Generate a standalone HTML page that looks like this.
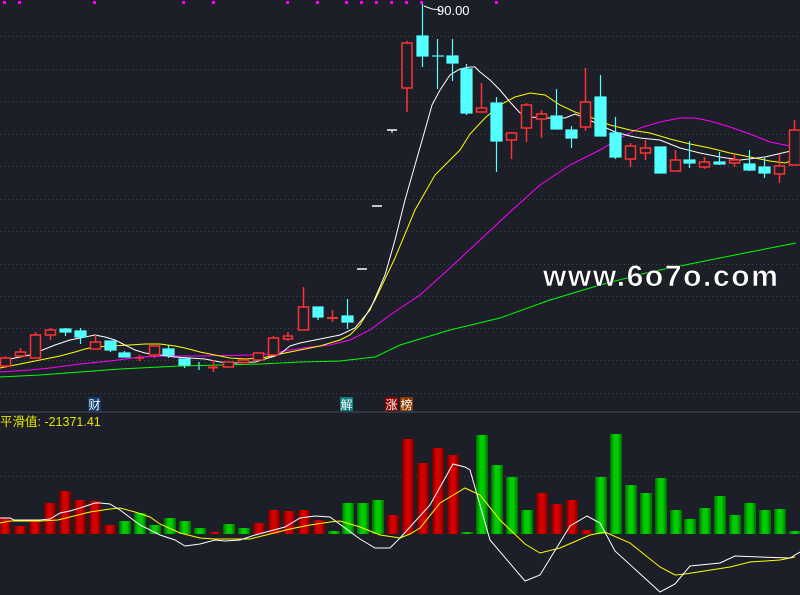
<!DOCTYPE html>
<html><head><meta charset="utf-8"><style>
html,body{margin:0;padding:0;background:#1c1f27;}
svg{display:block}
</style></head><body>
<svg width="800" height="595" xmlns="http://www.w3.org/2000/svg" font-family="Liberation Sans, Noto Sans CJK SC, sans-serif">
<defs>
<linearGradient id="gr" x1="0" x2="1"><stop offset="0" stop-color="#6a0000"/><stop offset="0.35" stop-color="#d40000"/><stop offset="0.65" stop-color="#d40000"/><stop offset="1" stop-color="#6a0000"/></linearGradient>
<linearGradient id="gg" x1="0" x2="1"><stop offset="0" stop-color="#006a00"/><stop offset="0.35" stop-color="#00cc00"/><stop offset="0.65" stop-color="#00cc00"/><stop offset="1" stop-color="#006a00"/></linearGradient>
</defs>
<rect width="800" height="595" fill="#1c1f27"/>
<g stroke="#3e4450" stroke-dasharray="1,3" stroke-width="1">
<line x1="0" x2="800" y1="36.5" y2="36.5"/><line x1="0" x2="800" y1="69.5" y2="69.5"/><line x1="0" x2="800" y1="101.5" y2="101.5"/><line x1="0" x2="800" y1="134.5" y2="134.5"/><line x1="0" x2="800" y1="166.5" y2="166.5"/><line x1="0" x2="800" y1="199.5" y2="199.5"/><line x1="0" x2="800" y1="231.5" y2="231.5"/><line x1="0" x2="800" y1="264.5" y2="264.5"/><line x1="0" x2="800" y1="296.5" y2="296.5"/><line x1="0" x2="800" y1="328.5" y2="328.5"/><line x1="0" x2="800" y1="360.5" y2="360.5"/><line x1="0" x2="800" y1="393.5" y2="393.5"/><line x1="0" x2="800" y1="476.5" y2="476.5"/>
</g>
<line x1="0" x2="800" y1="412" y2="412" stroke="#3a404c" stroke-width="1.5"/>
<g fill="#ff00ff">
<rect x="3" y="1" width="3" height="3"/><rect x="18" y="1" width="3" height="3"/><rect x="93" y="1" width="3" height="3"/><rect x="182" y="1" width="3" height="3"/><rect x="212" y="1" width="3" height="3"/><rect x="286" y="1" width="3" height="3"/><rect x="316" y="1" width="3" height="3"/><rect x="345" y="1" width="3" height="3"/><rect x="360" y="1" width="3" height="3"/><rect x="375" y="1" width="3" height="3"/><rect x="390" y="1" width="3" height="3"/><rect x="405" y="1" width="3" height="3"/><rect x="420" y="1" width="3" height="3"/><rect x="495" y="1" width="3" height="3"/>
</g>
<!-- MAs -->
<g fill="none" stroke-width="1">
<polyline stroke="#00ff00" points="0,377 40,375 80,372 120,369 180,366 260,364 300,362 340,361 375,357 400,345 450,330 500,318 550,300 600,285 650,272 700,262 750,252 796,243"/>
<polyline stroke="#ff00ff" points="0,372 30,370 50,368 80,364 110,361 140,357 170,356 200,356 250,355 270,354 290,350 310,347 330,345 350,340 370,330 390,315 420,295 450,268 480,240 510,212 540,185 570,165 600,150 620,138 640,128 660,122 680,118 695,118 710,121 730,127 750,134 770,142 790,146 800,145"/>
<polyline stroke="#ffff00" points="0,368 20,364 40,360 60,356 75,352 85,349 95,347 110,346 130,345 145,344 160,344 175,346 185,348 200,352 215,355 230,358 245,359 262,358 280,354 300,350 320,346 340,340 350,335 360,325 375,300 395,258 415,210 435,175 450,160 460,150 470,134 485,118 500,105 515,97 530,93 545,95 560,105 575,112 590,117 610,125 630,130 650,133 670,139 690,144 710,148 730,153 750,157 770,161 785,163 800,158"/>
<polyline stroke="#ffffff" points="0,361 10,359 30,355 40,351 55,345 70,340 85,337 95,335 105,337 115,340 125,345 135,350 145,353 160,355 175,357 190,358 205,359 220,362 235,363 255,362 265,359 275,356 280,354 290,346 300,343 320,339 340,335 355,328 370,310 385,275 395,240 405,200 415,165 425,130 432,105 440,90 450,75 460,69 470,67 475,67 480,72 490,80 500,90 510,102 520,113 530,117 545,118 565,118 575,114 585,118 600,125 615,132 630,136 640,138 660,140 680,148 700,153 720,157 740,160 765,157 795,150"/>
</g>
<!-- candles red hollow -->
<g stroke="#ff3232" fill="#1c1f27" stroke-width="1.5">
<line x1="5.5" x2="5.5" y1="356" y2="368"/><rect x="0.5" y="358" width="10" height="8"/>
<line x1="20.5" x2="20.5" y1="348" y2="358"/><rect x="15.5" y="352" width="10" height="4"/>
<line x1="35.5" x2="35.5" y1="332" y2="358"/><rect x="30.5" y="335" width="10" height="23"/>
<line x1="50.5" x2="50.5" y1="328" y2="340"/><rect x="45.5" y="330" width="10" height="5"/>
<line x1="95.5" x2="95.5" y1="335" y2="349"/><rect x="90.5" y="342" width="10" height="7"/>
<line x1="139.5" x2="139.5" y1="355" y2="361"/><line x1="135" x2="144" y1="358" y2="358"/>
<line x1="154.5" x2="154.5" y1="346" y2="358"/><rect x="149.5" y="346" width="10" height="9"/>
<line x1="213.5" x2="213.5" y1="360" y2="372"/><line x1="208" x2="218" y1="367.5" y2="367.5" stroke-width="2"/>
<rect x="223.5" y="362" width="10" height="5"/>
<rect x="238.5" y="360" width="10" height="2.5"/>
<rect x="253.5" y="353" width="10" height="7"/>
<line x1="273.5" x2="273.5" y1="336" y2="355"/><rect x="268.5" y="338" width="10" height="17"/>
<line x1="288" x2="288" y1="332" y2="341"/><rect x="283.5" y="336" width="9" height="3"/>
<line x1="303.5" x2="303.5" y1="287" y2="330"/><rect x="298.5" y="307" width="10" height="23"/>
<line x1="332.5" x2="332.5" y1="310" y2="322"/><line x1="327" x2="338" y1="318" y2="318" stroke-width="2"/>
<line x1="407" x2="407" y1="41" y2="112"/><rect x="402" y="43" width="10" height="45"/>
<line x1="481.5" x2="481.5" y1="83" y2="108"/><rect x="476.5" y="108" width="10" height="4"/>
<line x1="511.5" x2="511.5" y1="132" y2="159"/><rect x="506.5" y="133" width="10" height="7"/>
<line x1="526.5" x2="526.5" y1="103" y2="142"/><rect x="521.5" y="105" width="10" height="23"/>
<line x1="541.5" x2="541.5" y1="110" y2="138"/><rect x="536.5" y="114" width="10" height="5"/>
<line x1="585.5" x2="585.5" y1="68" y2="131"/><rect x="580.5" y="102" width="10" height="25"/>
<line x1="630.5" x2="630.5" y1="143" y2="167"/><rect x="625.5" y="146" width="10" height="13"/>
<line x1="645.5" x2="645.5" y1="140" y2="160"/><rect x="640.5" y="148" width="10" height="5"/>
<line x1="675.5" x2="675.5" y1="150" y2="171"/><rect x="670.5" y="160" width="10" height="11"/>
<line x1="704.5" x2="704.5" y1="157" y2="169"/><rect x="699.5" y="162" width="10" height="5"/>
<line x1="734.5" x2="734.5" y1="154" y2="167"/><rect x="729.5" y="160" width="10" height="3"/>
<line x1="779.5" x2="779.5" y1="154" y2="183"/><rect x="774.5" y="166" width="10" height="8"/>
<line x1="794.5" x2="794.5" y1="120" y2="130"/><rect x="789.5" y="130" width="11" height="35"/>
</g>
<!-- cyan filled -->
<g stroke="#54ffff" fill="#54ffff" stroke-width="1.2">
<line x1="65.5" x2="65.5" y1="328" y2="336"/><rect x="60" y="329" width="11" height="3"/>
<line x1="80.5" x2="80.5" y1="328" y2="344"/><rect x="75" y="331" width="11" height="6"/>
<line x1="110.5" x2="110.5" y1="341" y2="352"/><rect x="105" y="341" width="11" height="9"/>
<line x1="124.5" x2="124.5" y1="351" y2="357"/><rect x="119" y="353" width="11" height="4"/>
<line x1="168.5" x2="168.5" y1="345" y2="358"/><rect x="163" y="349" width="11" height="6"/>
<line x1="184.5" x2="184.5" y1="359" y2="368"/><rect x="179" y="359" width="11" height="6"/>
<line x1="199" x2="199" y1="362" y2="370"/>
<line x1="318" x2="318" y1="307" y2="320"/><rect x="313" y="307" width="10" height="10"/>
<line x1="347.5" x2="347.5" y1="299" y2="329"/><rect x="342" y="316" width="11" height="6"/>
<line x1="422.5" x2="422.5" y1="4" y2="67"/><rect x="417" y="36" width="11" height="20"/>
<line x1="437.5" x2="437.5" y1="39" y2="89"/><line x1="432" x2="444" y1="56" y2="56"/>
<line x1="452.5" x2="452.5" y1="39" y2="81"/><rect x="447" y="56" width="11" height="7"/>
<line x1="466.5" x2="466.5" y1="64" y2="115"/><rect x="461" y="69" width="11" height="44"/>
<line x1="496.5" x2="496.5" y1="97" y2="172"/><rect x="491" y="103" width="11" height="38"/>
<line x1="556.5" x2="556.5" y1="89" y2="129"/><rect x="551" y="116" width="11" height="13"/>
<line x1="571.5" x2="571.5" y1="126" y2="148"/><rect x="566" y="130" width="11" height="8"/>
<line x1="600.5" x2="600.5" y1="75" y2="136"/><rect x="595" y="97" width="11" height="39"/>
<line x1="615.5" x2="615.5" y1="117" y2="159"/><rect x="610" y="133" width="11" height="24"/>
<rect x="655" y="147" width="11" height="26"/>
<line x1="689.5" x2="689.5" y1="141" y2="168"/><rect x="684" y="160" width="11" height="3"/>
<line x1="719.5" x2="719.5" y1="152" y2="165"/><rect x="714" y="162" width="11" height="2"/>
<line x1="749.5" x2="749.5" y1="150" y2="171"/><rect x="744" y="164" width="11" height="6"/>
<line x1="764.5" x2="764.5" y1="158" y2="178"/><rect x="759" y="167" width="11" height="6"/>
</g>
<g stroke="#ffffff" stroke-width="1.5">
<line x1="357" x2="367" y1="269" y2="269"/><line x1="372" x2="382" y1="206" y2="206"/><line x1="387" x2="397" y1="130" y2="130"/><line x1="392" x2="392" y1="130" y2="133" stroke-width="1"/>
</g>
<polyline points="424,6 432,9 440,10" stroke="#ffffff" fill="none" stroke-width="1"/>
<text x="437" y="15" fill="#ffffff" font-size="13">90.00</text>
<!-- watermark -->
<text x="543" y="286" fill="#ffffff" stroke="#111" stroke-width="0.6" font-size="30" font-weight="bold" letter-spacing="1.6">www.6o7o.com</text>
<!-- labels -->
<rect x="88" y="397" width="13" height="14" fill="#0e3a6e"/><text x="88.5" y="409" fill="#fff" font-size="12">财</text>
<rect x="340" y="397" width="13" height="14" fill="#0b7f80"/><text x="340.5" y="409" fill="#fff" font-size="12">解</text>
<rect x="385" y="397" width="13" height="14" fill="#8a0000"/><text x="385.5" y="409" fill="#fff" font-size="12">涨</text>
<rect x="400" y="397" width="13" height="14" fill="#8a3a00"/><text x="400.5" y="409" fill="#fff" font-size="12">榜</text>
<text x="0" y="426" fill="#e6e600" font-size="12.5">平滑值: -21371.41</text>
<!-- bars -->
<g>
<rect x="-1" y="518" width="12" height="16" fill="url(#gr)"/>
<rect x="14" y="526" width="12" height="8" fill="url(#gr)"/>
<rect x="29" y="520" width="12" height="14" fill="url(#gr)"/>
<rect x="44" y="503" width="12" height="31" fill="url(#gr)"/>
<rect x="59" y="491" width="12" height="43" fill="url(#gr)"/>
<rect x="74" y="500" width="12" height="34" fill="url(#gr)"/>
<rect x="89" y="501" width="12" height="33" fill="url(#gr)"/>
<rect x="104" y="525" width="12" height="9" fill="url(#gr)"/>
<rect x="119" y="521" width="12" height="13" fill="url(#gg)"/>
<rect x="134" y="513" width="12" height="21" fill="url(#gg)"/>
<rect x="149" y="525" width="12" height="9" fill="url(#gg)"/>
<rect x="164" y="518" width="12" height="16" fill="url(#gg)"/>
<rect x="179" y="521" width="12" height="13" fill="url(#gg)"/>
<rect x="194" y="528" width="12" height="6" fill="url(#gg)"/>
<rect x="209" y="532" width="12" height="2" fill="url(#gr)"/>
<rect x="223" y="524" width="12" height="10" fill="url(#gg)"/>
<rect x="238" y="528" width="12" height="6" fill="url(#gg)"/>
<rect x="253" y="523" width="12" height="11" fill="url(#gr)"/>
<rect x="268" y="510" width="12" height="24" fill="url(#gr)"/>
<rect x="283" y="511" width="12" height="23" fill="url(#gr)"/>
<rect x="298" y="510" width="12" height="24" fill="url(#gr)"/>
<rect x="313" y="520" width="12" height="14" fill="url(#gr)"/>
<rect x="328" y="531" width="12" height="3" fill="url(#gg)"/>
<rect x="342" y="503" width="12" height="31" fill="url(#gg)"/>
<rect x="357" y="503" width="12" height="31" fill="url(#gg)"/>
<rect x="372" y="500" width="12" height="34" fill="url(#gg)"/>
<rect x="387" y="515" width="12" height="19" fill="url(#gr)"/>
<rect x="402" y="439" width="12" height="95" fill="url(#gr)"/>
<rect x="417" y="463" width="12" height="71" fill="url(#gr)"/>
<rect x="432" y="448" width="12" height="86" fill="url(#gr)"/>
<rect x="447" y="455" width="12" height="79" fill="url(#gr)"/>
<rect x="461" y="532" width="12" height="2" fill="url(#gg)"/>
<rect x="476" y="435" width="12" height="99" fill="url(#gg)"/>
<rect x="491" y="465" width="12" height="69" fill="url(#gg)"/>
<rect x="506" y="477" width="12" height="57" fill="url(#gg)"/>
<rect x="521" y="510" width="12" height="24" fill="url(#gg)"/>
<rect x="536" y="493" width="12" height="41" fill="url(#gr)"/>
<rect x="551" y="504" width="12" height="30" fill="url(#gr)"/>
<rect x="566" y="500" width="12" height="34" fill="url(#gr)"/>
<rect x="581" y="530" width="11" height="4" fill="url(#gr)"/>
<rect x="595" y="477" width="12" height="57" fill="url(#gg)"/>
<rect x="610" y="434" width="12" height="100" fill="url(#gg)"/>
<rect x="625" y="485" width="12" height="49" fill="url(#gg)"/>
<rect x="640" y="493" width="12" height="41" fill="url(#gg)"/>
<rect x="655" y="478" width="12" height="56" fill="url(#gg)"/>
<rect x="670" y="510" width="12" height="24" fill="url(#gg)"/>
<rect x="684" y="519" width="12" height="15" fill="url(#gg)"/>
<rect x="699" y="508" width="12" height="26" fill="url(#gg)"/>
<rect x="714" y="496" width="12" height="38" fill="url(#gg)"/>
<rect x="729" y="515" width="12" height="19" fill="url(#gg)"/>
<rect x="744" y="503" width="12" height="31" fill="url(#gg)"/>
<rect x="759" y="510" width="12" height="24" fill="url(#gg)"/>
<rect x="774" y="509" width="12" height="25" fill="url(#gg)"/>
<rect x="789" y="531" width="12" height="3" fill="url(#gg)"/>
</g>
<g fill="none" stroke-width="1">
<polyline stroke="#ffff00" points="0,523 10,521 40,521 58,520 70,517 90,512 110,509 120,508 135,512 150,517 160,524 180,533 200,538 215,539 250,539 270,534 290,529 310,525 330,522 340,521 360,527 380,535 400,538 410,534 420,528 440,503 465,488 480,495 500,520 525,544 540,553 560,548 590,535 605,532 630,543 660,567 675,575 685,574 730,567 750,562 780,560 795,557"/>
<polyline stroke="#ffffff" points="0,518 10,518 14,520 40,520 50,519 60,513 70,511 80,508 95,503 100,503 110,504 120,510 140,525 160,535 175,540 185,546 200,544 215,540 225,541 240,540 255,535 270,531 285,527 300,518 315,516 330,517 345,528 360,539 375,548 390,548 400,538 430,505 453,464 465,467 470,470 490,540 525,581 540,575 570,526 587,516 600,523 615,551 660,592 675,584 690,566 720,563 735,556 760,557 790,558 800,552"/>
</g>
</svg>
</body></html>
